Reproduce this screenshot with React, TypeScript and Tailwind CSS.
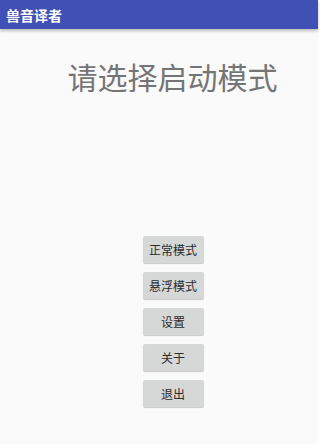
const font = { fontFamily: '"Noto Sans CJK SC", "Noto Sans", sans-serif' };

const modes = ['正常模式', '悬浮模式', '设置', '关于', '退出'];

export default function App() {
  return (
    <div className="flex h-[444px] w-[318px] flex-col bg-[#fafafa]" style={font}>
      <div className="relative z-10 flex h-[29px] items-center bg-[#3f51b5] px-[6px] shadow-[0_2px_3px_rgba(0,0,0,0.25)]">
        <span className="text-[14px] font-bold leading-none text-white">兽音译者</span>
      </div>
      <div className="flex justify-center pt-[29px] pl-[27px]">
        <span className="text-[30px] leading-[36px] text-[#757575]">请选择启动模式</span>
      </div>
      <div className="mt-[142px] flex flex-col items-center gap-[9px] pl-[28px]">
        {modes.map((m) => (
          <button
            key={m}
            type="button"
            className="flex h-[27px] w-[61px] items-center justify-center rounded-[2px] bg-[#d6d7d7] text-[12px] leading-none text-[#2b2b2b] shadow-[0_1px_1px_rgba(0,0,0,0.2)]"
          >
            {m}
          </button>
        ))}
      </div>
    </div>
  );
}
